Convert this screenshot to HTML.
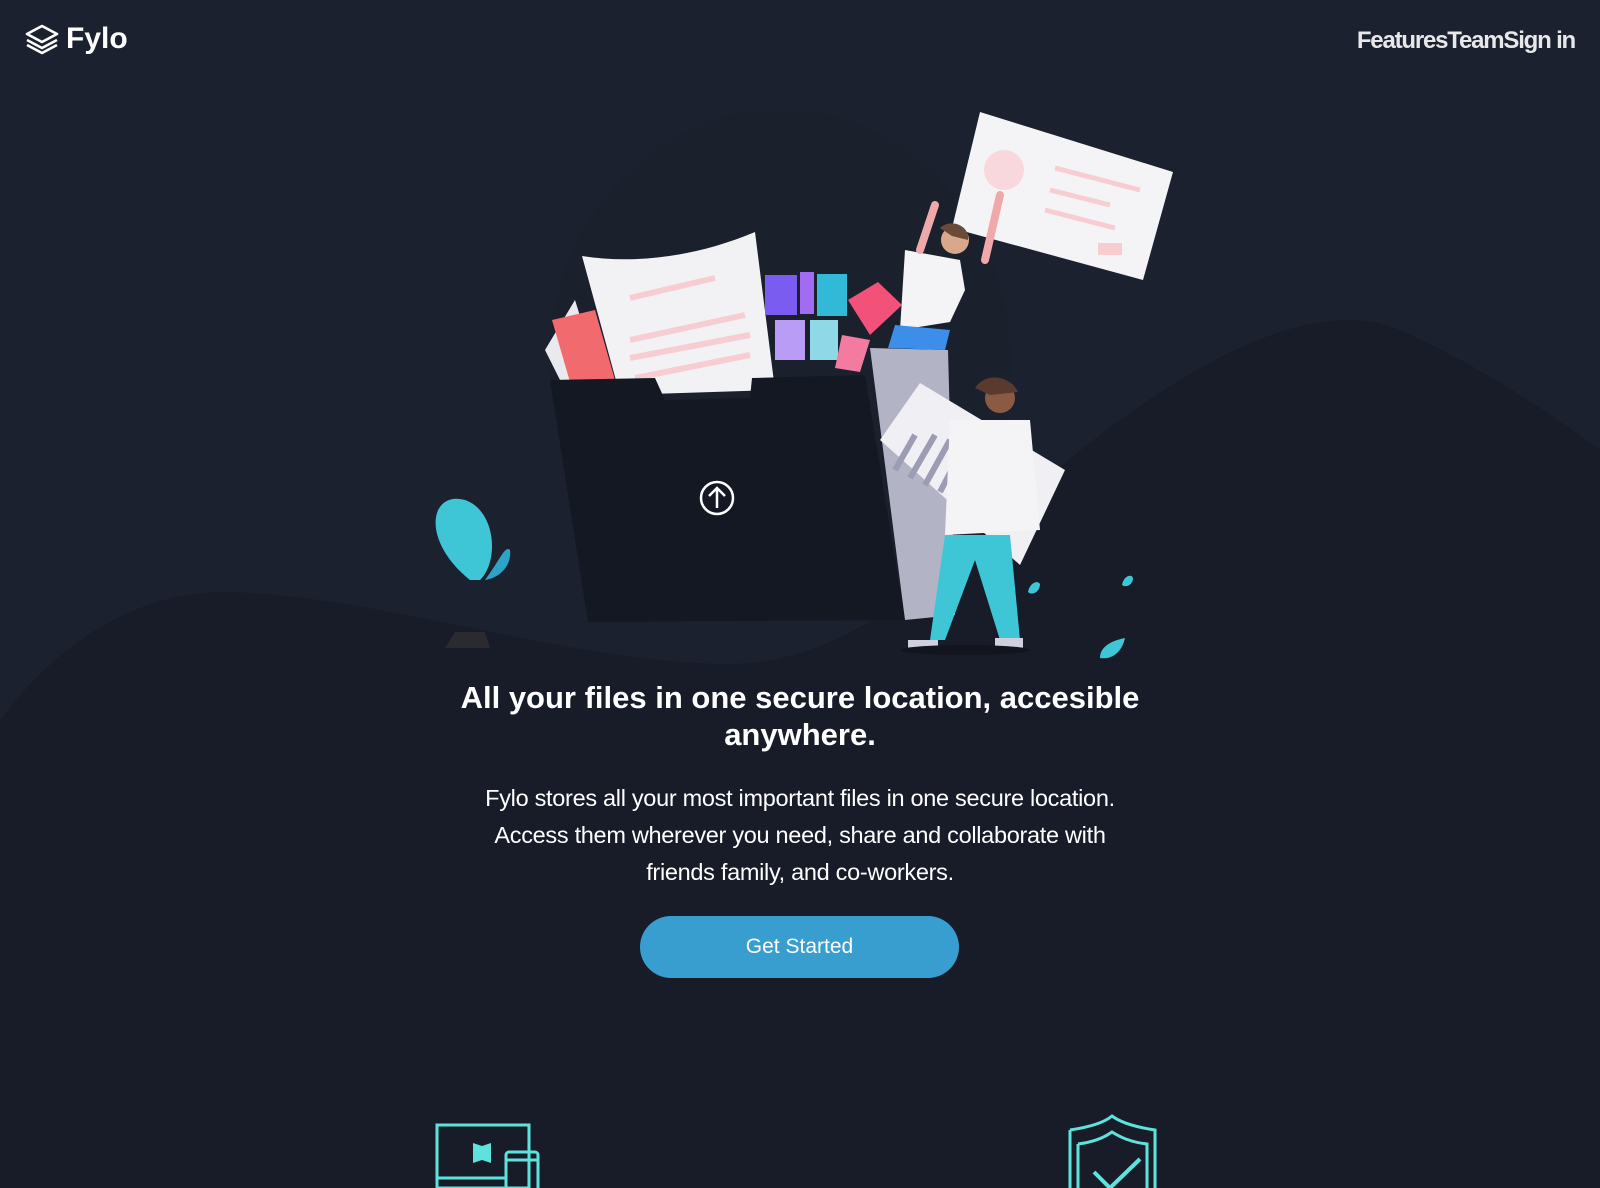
<!DOCTYPE html>
<html><head><meta charset="utf-8"><style>
html,body{margin:0;padding:0;}
body{width:1600px;height:1188px;overflow:hidden;background:#1c2130;font-family:"Liberation Sans",sans-serif;color:#fff;position:relative;}
.abs{position:absolute;}
.logo{left:24px;top:22px;display:flex;align-items:center;gap:6px;font-size:30px;font-weight:bold;}
.nav{right:25px;top:27px;font-size:24px;font-weight:bold;color:#e8e8ea;letter-spacing:-1.2px;}
h1{position:absolute;left:0;width:1600px;top:679px;margin:0;text-align:center;font-size:31px;line-height:37px;font-weight:bold;}
p{position:absolute;left:0;width:1600px;top:780px;margin:0;text-align:center;font-size:23.5px;line-height:37px;letter-spacing:-0.3px;}
.btn{left:640px;top:916px;width:319px;height:62px;border-radius:31px;background:#379ecf;text-align:center;line-height:62px;font-size:21px;}
</style></head><body>
<svg class="abs" style="left:0;top:0" width="1600" height="1188">
<ellipse cx="780" cy="360" rx="230" ry="250" fill="#1b202d"/>
<path d="M0 720 C60 640 140 590 230 592 C380 596 560 660 720 664 C880 668 980 520 1120 420 C1230 340 1330 300 1400 330 C1480 365 1560 420 1600 450 L1600 1188 L0 1188 Z" fill="#181c28"/>
<path d="M545 350 L575 300 L600 380 L560 380 Z" fill="#e9e9ee"/>
<path d="M552 320 L595 310 L615 380 L570 382 Z" fill="#f06a6e"/>
<path d="M582 256 C640 265 700 255 755 232 L775 390 L620 395 Z" fill="#f2f2f5"/>
<g stroke="#f7cdd2" stroke-width="6"><line x1="630" y1="298" x2="715" y2="278"/><line x1="630" y1="340" x2="745" y2="315"/><line x1="630" y1="358" x2="750" y2="335"/><line x1="635" y1="378" x2="750" y2="355"/></g>
<rect x="765" y="275" width="32" height="40" fill="#7a5cf0"/><rect x="800" y="272" width="14" height="42" fill="#a26cf2"/><rect x="817" y="274" width="30" height="42" fill="#33b9d8"/>
<rect x="775" y="320" width="30" height="40" fill="#b89cf5"/><rect x="810" y="320" width="28" height="40" fill="#8fd8e8"/>
<path d="M848 300 L878 282 L902 305 L870 335 Z" fill="#f2517a"/><path d="M842 335 L870 340 L860 372 L835 368 Z" fill="#f47ba0"/>
<path d="M870 348 L948 350 L955 615 L905 620 Z" fill="#b3b3c6"/>
<path d="M550 380 L655 378 L665 400 L750 398 L752 378 L865 375 L905 620 L588 622 Z" fill="#141823"/>
<circle cx="717" cy="498" r="16" fill="none" stroke="#fff" stroke-width="2.5"/><path d="M717 508 V489 M709 496 L717 488 L725 496" stroke="#fff" stroke-width="2.5" fill="none"/>
<path d="M980 112 L1173 172 L1143 280 L952 228 Z" fill="#f4f4f6"/>
<circle cx="1004" cy="170" r="20" fill="#f8d8dc"/>
<g stroke="#f7cdd2" stroke-width="5"><line x1="1055" y1="168" x2="1140" y2="190"/><line x1="1050" y1="190" x2="1110" y2="205"/><line x1="1045" y1="210" x2="1115" y2="228"/></g>
<rect x="1098" y="243" width="24" height="12" fill="#f7cdd2"/>
<path d="M905 250 L960 260 L965 290 L950 322 L900 330 Z" fill="#f4f4f6"/>
<path d="M895 325 L950 330 L945 350 L888 348 Z" fill="#3c8ee8"/>
<circle cx="955" cy="240" r="14" fill="#d9a88a"/><path d="M940 228 C950 218 970 225 968 240 L952 236 Z" fill="#6b4a3a"/>
<path d="M920 250 L935 205 M985 260 L1000 195" stroke="#f0a9aa" stroke-width="8" stroke-linecap="round"/>
<path d="M880 440 L920 383 L1065 470 L1020 565 Z" fill="#f0f0f4"/>
<g stroke="#9c9cb4" stroke-width="6"><line x1="895" y1="470" x2="915" y2="435"/><line x1="910" y1="478" x2="935" y2="435"/><line x1="925" y1="485" x2="950" y2="440"/><line x1="940" y1="492" x2="962" y2="450"/></g>
<path d="M950 420 L1030 420 L1040 530 L945 535 Z" fill="#f4f4f6"/>
<circle cx="1000" cy="398" r="15" fill="#8a5a44"/><path d="M975 388 C985 372 1010 375 1018 392 L990 395 Z" fill="#5a3a2e"/>
<path d="M945 535 L930 640 L945 640 L975 560 L1000 640 L1020 640 L1010 535 Z" fill="#3fc6d6"/>
<rect x="908" y="640" width="30" height="10" fill="#cfcfdf"/><rect x="995" y="638" width="28" height="10" fill="#cfcfdf"/>
<ellipse cx="965" cy="650" rx="65" ry="5" fill="#12151e"/>
<path d="M470 580 C420 540 430 490 465 500 C495 510 500 560 480 580 Z" fill="#3fc6d6"/>
<path d="M485 580 C500 560 505 545 510 550 C512 565 500 578 485 580 Z" fill="#2ea3c8"/>
<path d="M1028 592 C1030 582 1038 580 1040 584 C1040 592 1032 596 1028 592Z M1122 585 C1124 575 1132 574 1133 578 C1133 585 1126 588 1122 585Z M1100 658 C1100 645 1115 640 1125 638 C1122 652 1112 660 1100 658Z" fill="#3fc6d6"/>
<path d="M445 648 L455 632 L485 632 L490 648 Z" fill="#2a2a30"/>
<g fill="none" stroke="#5ee3dc" stroke-width="3">
<rect x="437" y="1125" width="92" height="63"/><rect x="506" y="1152" width="32" height="40" rx="3"/><line x1="506" y1="1160" x2="538" y2="1160"/><line x1="437" y1="1178" x2="506" y2="1178"/>
<path d="M1070 1130 C1090 1127 1105 1122 1112 1116 C1120 1122 1135 1127 1155 1130 L1155 1190 M1070 1130 L1070 1190"/>
<path d="M1078 1144 C1095 1142 1105 1137 1112 1132 C1120 1137 1130 1142 1147 1144 L1147 1190 M1078 1144 L1078 1190"/>
<path d="M1094 1172 L1110 1188 L1140 1159" stroke-width="4"/>
</g>
<path d="M473 1143 L482 1146 L491 1143 L491 1163 L482 1160 L473 1163 Z" fill="#5ee3dc"/>
</svg>
<div class="abs logo"><svg width="36" height="32" viewBox="0 0 36 32" fill="none" stroke="#fff" stroke-width="2.6" stroke-linejoin="round"><path d="M18 3 L33 11 L18 19 L3 11 Z"/><path d="M3 17 L18 25 L33 17"/><path d="M3 22 L18 30 L33 22"/></svg><span>Fylo</span></div>
<div class="abs nav">FeaturesTeamSign in</div>
<h1>All your files in one secure location, accesible<br>anywhere.</h1>
<p>Fylo stores all your most important files in one secure location.<br>Access them wherever you need, share and collaborate with<br>friends family, and co-workers.</p>
<div class="abs btn">Get Started</div>
</body></html>
